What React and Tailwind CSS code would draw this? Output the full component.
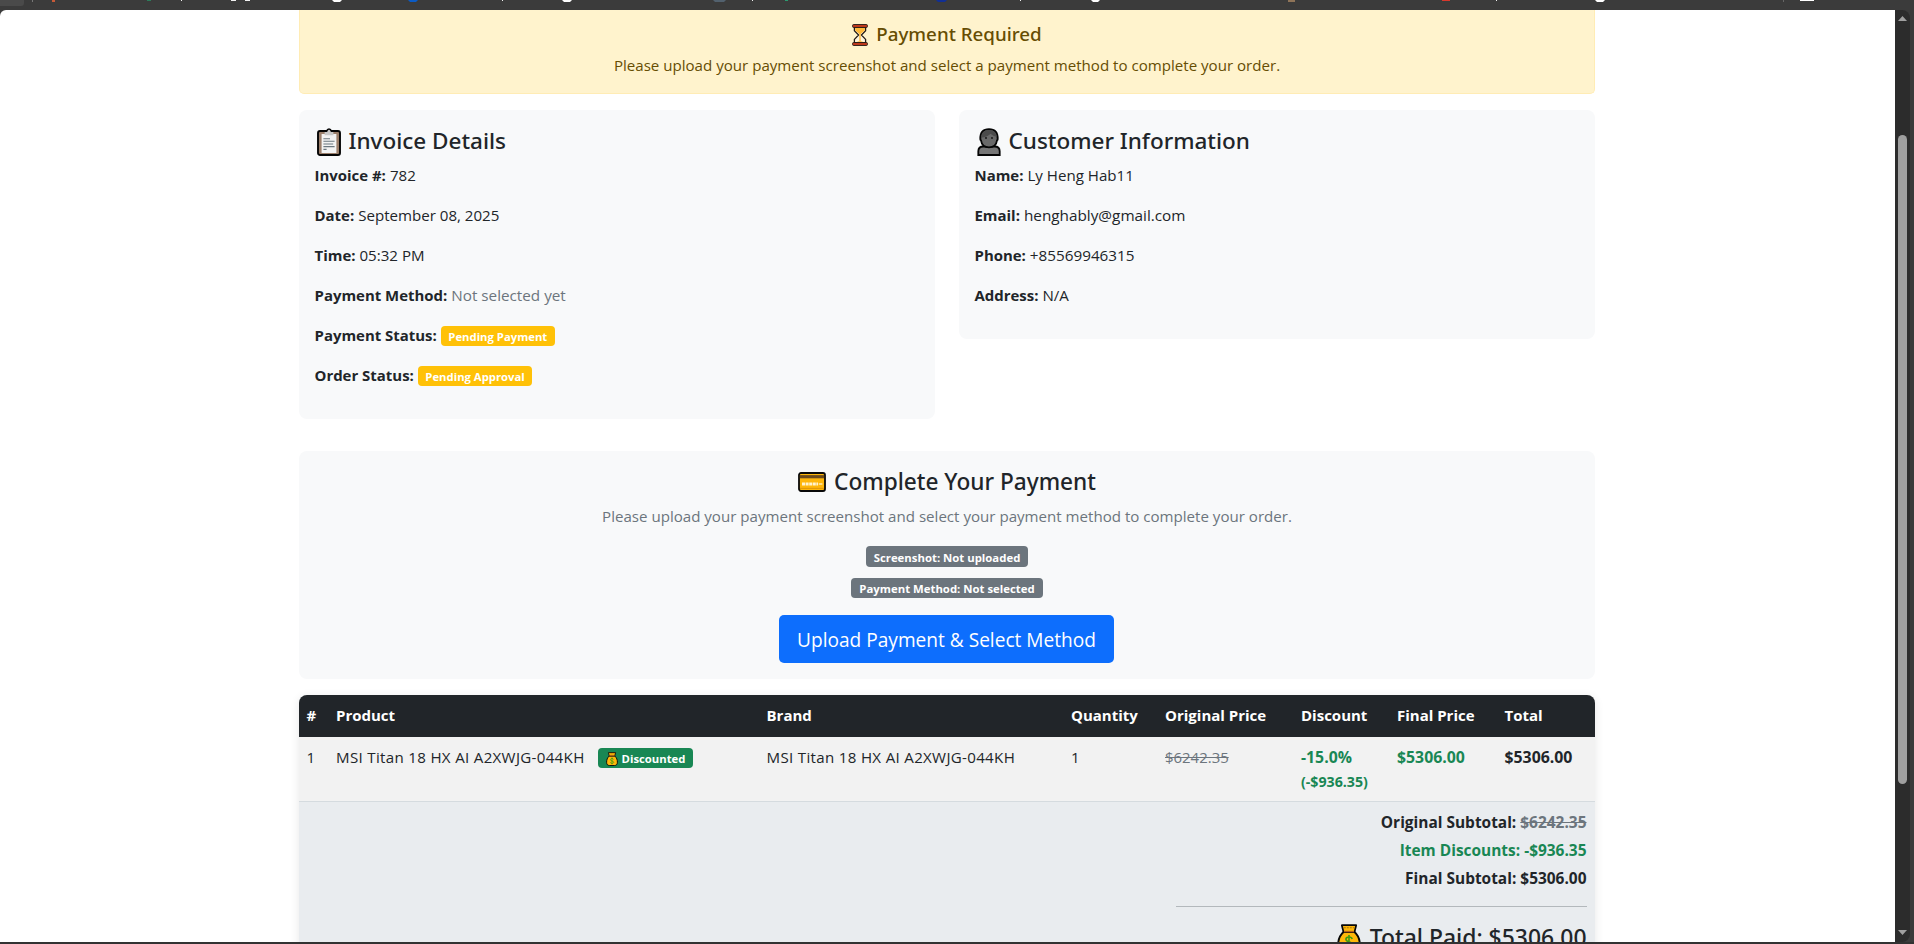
function Hourglass({ className }) {
  return (
    <svg viewBox="0 0 16 22" className={className} fill="none">
      <path d="M2.4 3.5v3.2L6.6 11l-4.2 4.4v3.2h11.2v-3.2L9.4 11l4.2-4.3V3.5z" fill="#fff4dc" stroke="#231a17" strokeWidth="1.3" />
      <path d="M3.2 3.5h9.6v3L8 10.6 3.2 6.5z" fill="#ffb93b" />
      <path d="M8 9.8v8.2" stroke="#ffb93b" strokeWidth="1.4" />
      <path d="M3.4 18.6 8 16.4l4.6 2.2z" fill="#ffc55c" />
      <rect x=".6" y=".6" width="14.8" height="2.8" rx=".9" fill="#cf3c1d" stroke="#231a17" strokeWidth="1" />
      <rect x=".6" y="18.6" width="14.8" height="2.8" rx=".9" fill="#cf3c1d" stroke="#231a17" strokeWidth="1" />
    </svg>
  );
}

function Clipboard({ className }) {
  return (
    <svg viewBox="0 0 24 28" className={className} fill="none">
      <rect x="1" y="3" width="22" height="24" rx="2" fill="#9b7f6b" stroke="#050505" strokeWidth="1.9" />
      <path d="M4.6 6h14.8v19H4.6z" fill="#f3f3f3" />
      <path d="M7.6 7.2V4.6q0-1 1-1h1.2q.5-2.4 2.2-2.4t2.2 2.4h1.2q1 0 1 1v2.6z" fill="#c9c9c9" />
      <path d="M7.4 3.2h2.2q.6-2.200 2.400-2.200t2.400 2.200h2.200" stroke="#050505" strokeWidth="1.500" />
      <path d="M6.400 10.700H13M6.400 13.300h11.200M6.400 16h9.800M6.400 18.600h11.200M6.400 21.400h3.200" stroke="#6b7880" strokeWidth="1.100" />
    </svg>
  );
}

function Person({ className }) {
  return (
    <svg viewBox="0 0 24 28" className={className} fill="none">
      <path d="M1.300 27v-3.800q0-4.700 5-4.700h11.400q5 0 5 4.700V27z" fill="#767676" stroke="#050505" strokeWidth="1.800" />
      <path d="M3.300 11.200Q2.900 1.200 12 1.200t8.700 10q0 .9-.7 1.200-1 7-8 7t-8-7q-.7-.3-.7-1.200z" fill="#696969" stroke="#050505" strokeWidth="1.800" />
      <path d="M4.200 8.800Q5 2 12 2t7.800 6.800q-3.800-.5-6.200-3Q10 9.400 4.200 9.600z" fill="#4b4b4b" />
      <circle cx="9" cy="10" r=".9" fill="#111" />
      <circle cx="15" cy="10" r=".9" fill="#111" />
    </svg>
  );
}

function CreditCard({ className }) {
  return (
    <svg viewBox="0 0 28 20" className={className} fill="none">
      <rect x="1" y="1" width="26" height="18" rx="2" fill="#ffb70a" stroke="#090909" strokeWidth="1.800" />
      <path d="M1.900 3.100h24.200v3.200H1.900z" fill="#6b4a1c" />
      <path d="M4 12h16" stroke="#fff3d0" strokeWidth="2.800" strokeDasharray="3 .6" />
      <path d="M20.800 12h3.600" stroke="#ffe39a" strokeWidth="1.800" />
      <path d="M2 16.400h24" stroke="#e39a08" strokeWidth="1.200" />
    </svg>
  );
}

function MoneyBag({ className }) {
  return (
    <svg viewBox="0 0 24 28" className={className} fill="none">
      <path d="M6.5 8C2.500 11.500 1.200 16 1.200 20.500 1.200 25 3.500 27 7 27H17C20.500 27 22.800 25 22.800 20.500 22.800 16 21.500 11.500 17.500 8Z" fill="#ffb70a" stroke="#090909" strokeWidth="1.900" />
      <path d="M4.800 1.200H19.200L17.500 8H6.500Z" fill="#ffb70a" stroke="#090909" strokeWidth="1.700" strokeLinejoin="round" />
      <path d="M6.800 3.800H17.200" stroke="#a8780c" strokeWidth="1.100" strokeDasharray="2 1" />
      <path d="M7 7.600H17" stroke="#b5601c" strokeWidth="1.500" />
      <path d="M15.200 15C14.800 13.500 13.500 13 12 13 10 13 8.900 14 8.900 15.300 8.900 18.800 15.300 17.200 15.300 20.500 15.300 22 14 22.800 12 22.800 10.300 22.800 9 22 8.700 20.700M12 11V24.700" stroke="#3f9c12" strokeWidth="1.600" />
    </svg>
  );
}

const bookmarkMarks = [
  { x: 32, w: 1, h: 2, c: "#777777" },
  { x: 52, w: 3, h: 2, c: "#c65a38" },
  { x: 147, w: 4, h: 1, c: "#2c7d5b" },
  { x: 181, w: 1, h: 1, c: "#f2f2f2" },
  { x: 231, w: 5, h: 1, c: "#f2f2f2" },
  { x: 245, w: 5, h: 1, c: "#f2f2f2" },
  { x: 332, w: 10, h: 2, c: "#ffffff" },
  { x: 408, w: 10, h: 2, c: "#0b5bc4" },
  { x: 502, w: 1, h: 1, c: "#f2f2f2" },
  { x: 562, w: 10, h: 2, c: "#ffffff" },
  { x: 713, w: 13, h: 2, c: "#52616e" },
  { x: 752, w: 1, h: 1, c: "#f2f2f2" },
  { x: 785, w: 3, h: 1, c: "#2c9a70" },
  { x: 936, w: 11, h: 2, c: "#112f94" },
  { x: 1020, w: 1, h: 1, c: "#f2f2f2" },
  { x: 1091, w: 9, h: 2, c: "#ffffff" },
  { x: 1288, w: 7, h: 2, c: "#8f7458" },
  { x: 1442, w: 8, h: 1, c: "#d8382c" },
  { x: 1496, w: 1, h: 1, c: "#f2f2f2" },
  { x: 1595, w: 10, h: 2, c: "#ffffff" },
  { x: 1783, w: 1, h: 2, c: "#666666" },
  { x: 1800, w: 14, h: 1, c: "#ffffff" },
];

function BookmarksBar() {
  return (
    <div className="h-[10px] shrink-0">
      <svg width="1914" height="10" viewBox="0 0 1914 10">
        <path d="M0 0h24v3q0 3-3 3H0z" fill="#4a4a4a" />
        {bookmarkMarks.map((m) => (
          <path
            key={m.x}
            d={
              m.w > 7 && m.h > 1
                ? `M${m.x} 0h${m.w}l-2 ${m.h}h-${m.w - 4}z`
                : `M${m.x} 0h${m.w}v${m.h}h-${m.w}z`
            }
            fill={m.c}
          />
        ))}
      </svg>
    </div>
  );
}

function Scrollbar() {
  return (
    <div className="flex w-[15px] shrink-0 flex-col items-center rounded-r-lg bg-[#2c2c2c] pt-[6px] pb-[7px]">
      <svg width="9" height="5" viewBox="0 0 9 5">
        <path d="M4.500 0 9 5H0z" fill="#a0a0a0" />
      </svg>
      <div className="mt-[114px] h-[649px] w-[9px] rounded-full bg-[#9f9f9f]" />
      <div className="grow" />
      <svg width="9" height="5" viewBox="0 0 9 5">
        <path d="M0 0h9L4.500 5z" fill="#a0a0a0" />
      </svg>
    </div>
  );
}

function Heading({ icon, children, size = "text-[22.5px]" }) {
  return (
    <h3 className={"mb-2 flex h-[28.8px] items-center pt-[2.5px] font-['Noto_Sans',sans-serif] leading-[28.8px] font-medium " + size}>
      {icon}
      <span className="whitespace-nowrap">{children}</span>
    </h3>
  );
}

function Field({ label, children }) {
  return (
    <div className="mb-4 flex h-6 items-start gap-1">
      <strong className="text-[14.95px] font-bold whitespace-nowrap">{label}</strong>
      {children}
    </div>
  );
}

function Pending({ children }) {
  return (
    <span className="mt-[3px] h-5 rounded-[4px] bg-[#ffc107] px-[7.5px] text-[11.3px] leading-[21px] font-bold whitespace-nowrap text-white">
      {children}
    </span>
  );
}

function StatusPill({ children, className }) {
  return (
    <span className={"rounded-[4px] bg-[#6c757d] px-2 text-[11.36px] font-bold whitespace-nowrap text-white " + className}>
      {children}
    </span>
  );
}

const columns = "grid grid-cols-[29.5px_430.5px_304.5px_94px_136px_96px_107.5px_98px]";

export default function App() {
  return (
    <div className="flex h-[944px] w-[1914px] flex-col overflow-hidden bg-[#3b3b3b] font-['Open_Sans','Noto_Sans',sans-serif] text-[15.1px] leading-6 text-[#212529]">
      <BookmarksBar />
      <div className="flex h-[932px] shrink-0">
        <main className="h-[932px] w-[1895px] overflow-hidden rounded-tl-[6px] bg-white pl-[299px]">
          <div className="w-[1296px]">
            <section className="mb-4 flex h-[84px] flex-col items-center rounded-b-[5px] border border-t-0 border-[#ffecb5] bg-[#fff3cd] pt-[11px] text-[#664d03]">
              <h4 className="mb-2 flex h-6 items-center gap-2 font-['Noto_Sans',sans-serif] text-[18.75px] font-medium">
                <Hourglass className="mt-[3px] h-[22px] w-4" />
                <span className="pt-[2px]">Payment Required</span>
              </h4>
              <p>Please upload your payment screenshot and select a payment method to complete your order.</p>
            </section>

            <div className="mb-8 flex items-start gap-6">
              <section className="w-[636px] rounded-[8px] bg-[#f8f9fa] p-4 pl-[15.5px]">
                <Heading icon={<Clipboard className="mr-[8px] ml-[2px] h-7 w-6" />}>Invoice Details</Heading>
                <Field label="Invoice #:">782</Field>
                <Field label="Date:">September 08, 2025</Field>
                <Field label="Time:">05:32 PM</Field>
                <Field label="Payment Method:">
                  <span className="text-[15.25px] text-[#6c757d]">Not selected yet</span>
                </Field>
                <Field label="Payment Status:">
                  <Pending>Pending Payment</Pending>
                </Field>
                <Field label="Order Status:">
                  <Pending>Pending Approval</Pending>
                </Field>
              </section>
              <section className="w-[636px] rounded-[8px] bg-[#f8f9fa] p-4 pl-[15.5px]">
                <Heading icon={<Person className="mr-[8px] ml-[2px] h-7 w-6" />}>Customer Information</Heading>
                <Field label="Name:">Ly Heng Hab11</Field>
                <Field label="Email:">
                  <span className="text-[15.3px]">henghably@gmail.com</span>
                </Field>
                <Field label="Phone:">
                  <span className="text-[15.25px]">+85569946315</span>
                </Field>
                <Field label="Address:">N/A</Field>
              </section>
            </div>

            <section className="mb-4 flex h-[228px] flex-col items-center rounded-[8px] bg-[#f8f9fa] pt-4">
              <Heading icon={<CreditCard className="mr-[8px] h-5 w-7" />} size="text-[22.65px]">
                Complete Your Payment
              </Heading>
              <p className="h-6 text-[#6c757d]">
                Please upload your payment screenshot and select your payment method to complete your order.
              </p>
              <StatusPill className="mt-[18px] h-[21px] leading-[23px]">Screenshot: Not uploaded</StatusPill>
              <StatusPill className="mt-[11px] h-5 leading-[21px]">Payment Method: Not selected</StatusPill>
              <button className="mt-[17px] mr-px h-12 w-[335px] rounded-[5px] bg-[#0d6efd] pt-[2px] text-[19.1px] whitespace-nowrap text-white">
                Upload Payment &amp; Select Method
              </button>
            </section>

            <section className="h-[300px] overflow-hidden rounded-[8px] bg-[#e9ecef] shadow-[0_2px_10px_rgba(0,0,0,0.1)]">
              <div className={columns + " h-[42px] bg-[#212529] text-[15px] leading-[40px] font-bold text-white *:pl-[7.5px]"}>
                <span>#</span>
                <span>Product</span>
                <span>Brand</span>
                <span>Quantity</span>
                <span>Original Price</span>
                <span>Discount</span>
                <span>Final Price</span>
                <span>Total</span>
              </div>
              <div className={columns + " h-[65px] border-b border-[#d5dbdf] bg-[#f2f2f2] pt-2 *:pl-[7.5px]"}>
                <span>1</span>
                <span className="flex items-start">
                  <span className="tracking-[0.32px]">MSI Titan 18 HX AI A2XWJG-044KH</span>
                  <span className="mt-[3px] ml-[13px] flex h-5 items-center gap-1 rounded-[4px] bg-[#198754] px-2 text-[11.3px] leading-[21px] font-bold text-white">
                    <MoneyBag className="mt-[2px] h-[14px] w-3" />
                    <span className="pt-px">Discounted</span>
                  </span>
                </span>
                <span className="tracking-[0.32px]">MSI Titan 18 HX AI A2XWJG-044KH</span>
                <span>1</span>
                <span className="text-[14.95px] text-[#6c757d] line-through">$6242.35</span>
                <span className="flex flex-col font-bold text-[#198754]">
                  <span className="text-[15.8px]">-15.0%</span>
                  <span className="pt-px text-[14.2px]">(-$936.35)</span>
                </span>
                <span className="text-[15.85px] font-bold text-[#198754]">$5306.00</span>
                <span className="text-[15.85px] font-bold">$5306.00</span>
              </div>
              <div className="flex flex-col items-end pt-2 pr-[8.5px] text-[15.45px] font-bold">
                <p className="h-7">
                  Original Subtotal: <span className="text-[#6c757d] line-through">$6242.35</span>
                </p>
                <p className="h-7 text-[#198754]">Item Discounts: -$936.35</p>
                <p className="h-7">Final Subtotal: $5306.00</p>
                <div className="mt-3 h-px w-[411px] bg-[#b3b8bc]" />
                <div className="mt-[16px]">
                  <Heading icon={<MoneyBag className="mr-[9px] h-7 w-6" />} size="text-[22.9px]">
                    Total Paid: $5306.00
                  </Heading>
                </div>
              </div>
            </section>
          </div>
        </main>
        <Scrollbar />
      </div>
      <div className="h-[2px] shrink-0 bg-[#323232]" />
    </div>
  );
}
